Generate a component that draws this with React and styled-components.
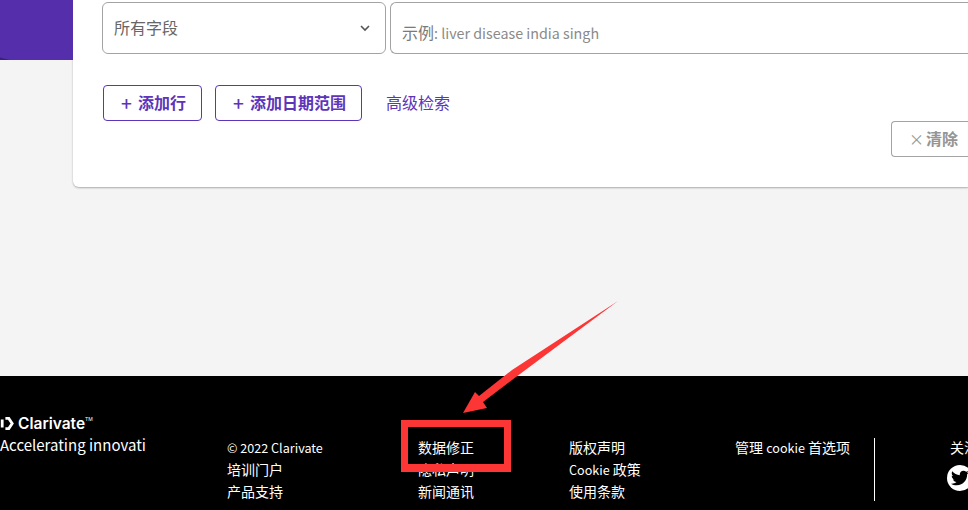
import React from "react";
import styled, {createGlobalStyle} from "styled-components";
import {FaTwitter} from "react-icons/fa";

const GlobalStyle = createGlobalStyle`
  html, body {
    margin: 0;
    padding: 0;
    height: 510px;
    overflow: hidden;
    background: #000;
  }
  body {
    font-family: "Noto Sans CJK SC", "Noto Sans", sans-serif;
  }
  * {
    box-sizing: border-box;
  }
`;

const Page = styled.div`
  position: relative;
  width: 968px;
  height: 510px;
  overflow: hidden;
`;

const Main = styled.main`
  display: flex;
  align-items: flex-start;
  height: 376px;
  background: #f4f4f4;
`;

const Banner = styled.div`
  flex: 0 0 73px;
  height: 60px;
  background: #552eab;
  position: relative;
  overflow: hidden;

  &::after {
    content: "";
    position: absolute;
    left: -20px;
    bottom: -7px;
    width: 34px;
    height: 10px;
    background: #3c1f86;
    transform: rotate(14deg);
  }
`;

const Card = styled.section`
  flex: 0 0 895px;
  height: 187px;
  padding: 2px 0 0 29px;
  background: #fff;
  border-radius: 0 0 0 6px;
  box-shadow: 0 1px 2px rgba(0, 0, 0, 0.3);
`;

const SearchRow = styled.div`
  display: flex;
  gap: 4px;
`;

const FieldSelect = styled.div`
  flex: 0 0 284px;
  height: 52px;
  padding: 0 15px 2px 11px;
  display: flex;
  align-items: center;
  justify-content: space-between;
  border: 1px solid #a3a3a3;
  border-radius: 6px;
  color: #666;
  font-size: 16px;
`;

const Chevron = styled.svg`
  width: 10px;
  height: 7px;
  margin-top: 2px;
  fill: none;
  stroke: #555;
  stroke-width: 1.6;
`;

const QueryBox = styled.div`
  flex: 1;
  height: 52px;
  padding: 17px 11px 0;
  border: 1px solid #a3a3a3;
  border-right: 0;
  border-radius: 6px 0 0 6px;
  color: #7a7a7a;
  font-size: 16px;
  line-height: 24px;
  white-space: nowrap;
`;

const Hint = styled.span`
  font-size: 14.3px;
  color: #8a8a8a;
`;

const Actions = styled.div`
  display: flex;
  align-items: center;
  margin-top: 31px;
  padding-left: 1px;
`;

const OutlineButton = styled.button`
  height: 36px;
  width: ${props => props.$width}px;
  margin-right: ${props => props.$gap}px;
  padding: 0 0 2px 2px;
  display: flex;
  align-items: center;
  justify-content: center;
  gap: 6px;
  background: #fff;
  border: 1px solid #5e35b8;
  border-radius: 4px;
  color: #5e35b8;
  font: 700 16px "Noto Sans CJK SC", sans-serif;

  span {
    font-size: 19px;
    font-weight: 500;
    line-height: 1;
  }
`;

const TextLink = styled.a`
  margin-top: -2px;
  color: #5e35b8;
  font-size: 16px;
`;

const ClearRow = styled.div`
  display: flex;
  justify-content: flex-end;
`;

const ClearButton = styled.button`
  width: 77px;
  height: 36px;
  padding: 0 0 2px 17px;
  display: flex;
  align-items: center;
  gap: 5px;
  background: #fff;
  border: 1px solid #a3a3a3;
  border-right: 0;
  border-radius: 4px 0 0 4px;
  color: #959595;
  font: 700 16px "Noto Sans CJK SC", sans-serif;

  span {
    width: 12px;
    font-size: 15px;
    font-weight: 400;
    line-height: 1;
  }
`;

const Footer = styled.footer`
  height: 134px;
  display: flex;
  align-items: flex-start;
  background: #000;
  color: #fff;
  font-size: 14px;
`;

const Brand = styled.div`
  flex: 0 0 146px;
  margin: 37px 81px 0 0;
  overflow: hidden;
  white-space: nowrap;
`;

const Logo = styled.div`
  display: flex;
  align-items: center;
  gap: 3px;
  height: 20px;
  font: 600 15.5px Inter, "Liberation Sans", sans-serif;

  sup {
    font-size: 5px;
    font-weight: 400;
    align-self: flex-start;
    margin: 3px 0 0 -3px;
  }
`;

const Tagline = styled.div`
  font-size: 15px;
  line-height: 24px;
`;

const LinkColumn = styled.div`
  flex: 0 0 ${props => props.$width}px;
  margin-top: 61px;
  display: flex;
  flex-direction: column;
  white-space: nowrap;
`;

const FooterLink = styled.span`
  height: 22px;
  line-height: 20px;
`;

const Latin = styled.span`
  font-size: 12.6px;
`;

const Divider = styled.div`
  flex: 0 0 1px;
  height: 63px;
  margin: 62px 75px 0 0;
  background: #fff;
`;

const Social = styled.div`
  margin-top: 61px;
  line-height: 20px;
  white-space: nowrap;
`;

const TwitterBadge = styled.span`
  width: 26px;
  height: 26px;
  margin: 8px 0 0 -3px;
  display: flex;
  align-items: center;
  justify-content: center;
  border-radius: 50%;
  background: #fff;
  color: #000;
  font-size: 18px;
`;

const Markup = styled.svg`
  position: absolute;
  left: 0;
  top: 0;
  width: 968px;
  height: 510px;
  pointer-events: none;
`;

const Callout = styled.div`
  position: absolute;
  left: 401px;
  top: 420px;
  width: 110px;
  height: 52px;
  border: 7px solid #fc3535;
  border-bottom-width: 8px;
`;

const footerColumns = [
	{width: 191, links: [<Latin>© 2022 Clarivate</Latin>, "培训门户", "产品支持"]},
	{width: 151, links: ["数据修正", "隐私声明", "新闻通讯"]},
	{width: 166, links: ["版权声明", <><Latin>Cookie</Latin> 政策</>, "使用条款"]},
	{width: 139, links: [<>管理 <Latin>cookie</Latin> 首选项</>]},
];

const App = () => {
	return (
		<Page>
			<GlobalStyle/>
			<Main>
				<Banner/>
				<Card>
					<SearchRow>
						<FieldSelect>
							所有字段
							<Chevron viewBox="0 0 10 7"><path d="M1 1l4 4 4-4"/></Chevron>
						</FieldSelect>
						<QueryBox>示例<Hint>: liver disease india singh</Hint></QueryBox>
					</SearchRow>
					<Actions>
						<OutlineButton $width={99} $gap={13}><span>+</span>添加行</OutlineButton>
						<OutlineButton $width={147} $gap={24}><span>+</span>添加日期范围</OutlineButton>
						<TextLink>高级检索</TextLink>
					</Actions>
					<ClearRow>
						<ClearButton><span>×</span>清除</ClearButton>
					</ClearRow>
				</Card>
			</Main>
			<Footer>
				<Brand>
					<Logo>
						<svg width="15" height="15" viewBox="0 0 15 15">
							<path fill="none" stroke="#fff" strokeWidth="2.8" d="M2.2 3.6v7.8M5.4 2.4h3.4l3.4 5.1-3.4 5.1H5.4"/>
						</svg>
						Clarivate<sup>TM</sup>
					</Logo>
					<Tagline>Accelerating innovation</Tagline>
				</Brand>
				{footerColumns.map((column, c) => (
					<LinkColumn key={c} $width={column.width}>
						{column.links.map((link, i) => <FooterLink key={i}>{link}</FooterLink>)}
					</LinkColumn>
				))}
				<Divider/>
				<Social>
					关注我们
					<TwitterBadge><FaTwitter/></TwitterBadge>
				</Social>
			</Footer>
			<Markup viewBox="0 0 968 510">
				<polygon fill="#fc3535" points="618,301 520,374 483,402 487,408 463,413 475,392 479,396 512,370"/>
			</Markup>
			<Callout/>
		</Page>
	)
}

export default App;
